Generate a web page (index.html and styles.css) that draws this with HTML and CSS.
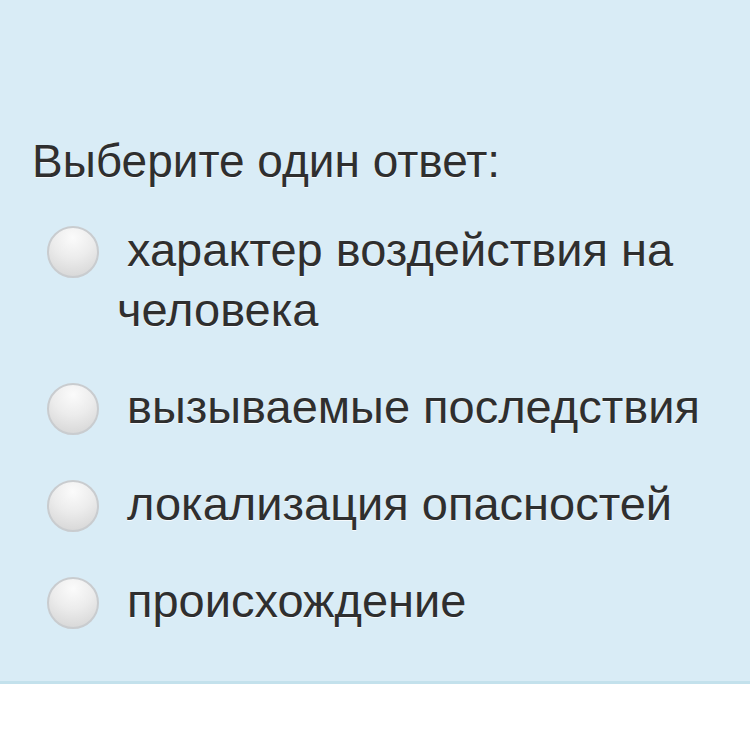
FILE: index.html
```html
<!DOCTYPE html>
<html lang="ru">
<head>
<meta charset="utf-8">
<link rel="stylesheet" href="styles.css">
</head>
<body>
<div class="panel">
  <div class="prompt">Выберите один ответ:</div>
  <div class="answers">
    <div class="option"><span class="radio"></span><span class="label">характер воздействия на человека</span></div>
    <div class="option"><span class="radio"></span><span class="label">вызываемые последствия</span></div>
    <div class="option"><span class="radio"></span><span class="label">локализация опасностей</span></div>
    <div class="option"><span class="radio"></span><span class="label">происхождение</span></div>
  </div>
</div>
</body>
</html>
```
FILE: styles.css
```css
html, body {
  margin: 0;
  padding: 0;
  background: #ffffff;
}
body {
  font-family: "Liberation Sans", Arial, sans-serif;
  color: #2f2f2f;
}
.panel {
  background: #d9ecf6;
  height: 684px;
  box-sizing: border-box;
  padding: 131px 20px 0 32px;
  border-bottom: 3px solid #c3e1ec;
  box-shadow: 0 1px 0 #e4f7fb;
}
.prompt {
  font-size: 46px;
  line-height: 60px;
  text-shadow: 0 1px 0 rgba(255, 255, 255, 0.8);
}
.answers {
  display: flex;
  flex-direction: column;
  gap: 37px;
  margin-top: 29px;
}
.option {
  display: flex;
  align-items: flex-start;
}
.radio {
  flex: none;
  width: 48px;
  height: 48px;
  margin: 6px 0 0 15px;
  border-radius: 50%;
  border: 2px solid #c9cccf;
  background: radial-gradient(circle at 50% 20%, #fbfbfb 0%, #ececec 45%, #d2d2d2 100%);
  box-sizing: content-box;
}
.label {
  margin-left: 18px;
  font-size: 47px;
  line-height: 60px;
  text-indent: 10px;
  text-shadow: 0 1px 0 rgba(255, 255, 255, 0.8);
  max-width: 600px;
}
```
